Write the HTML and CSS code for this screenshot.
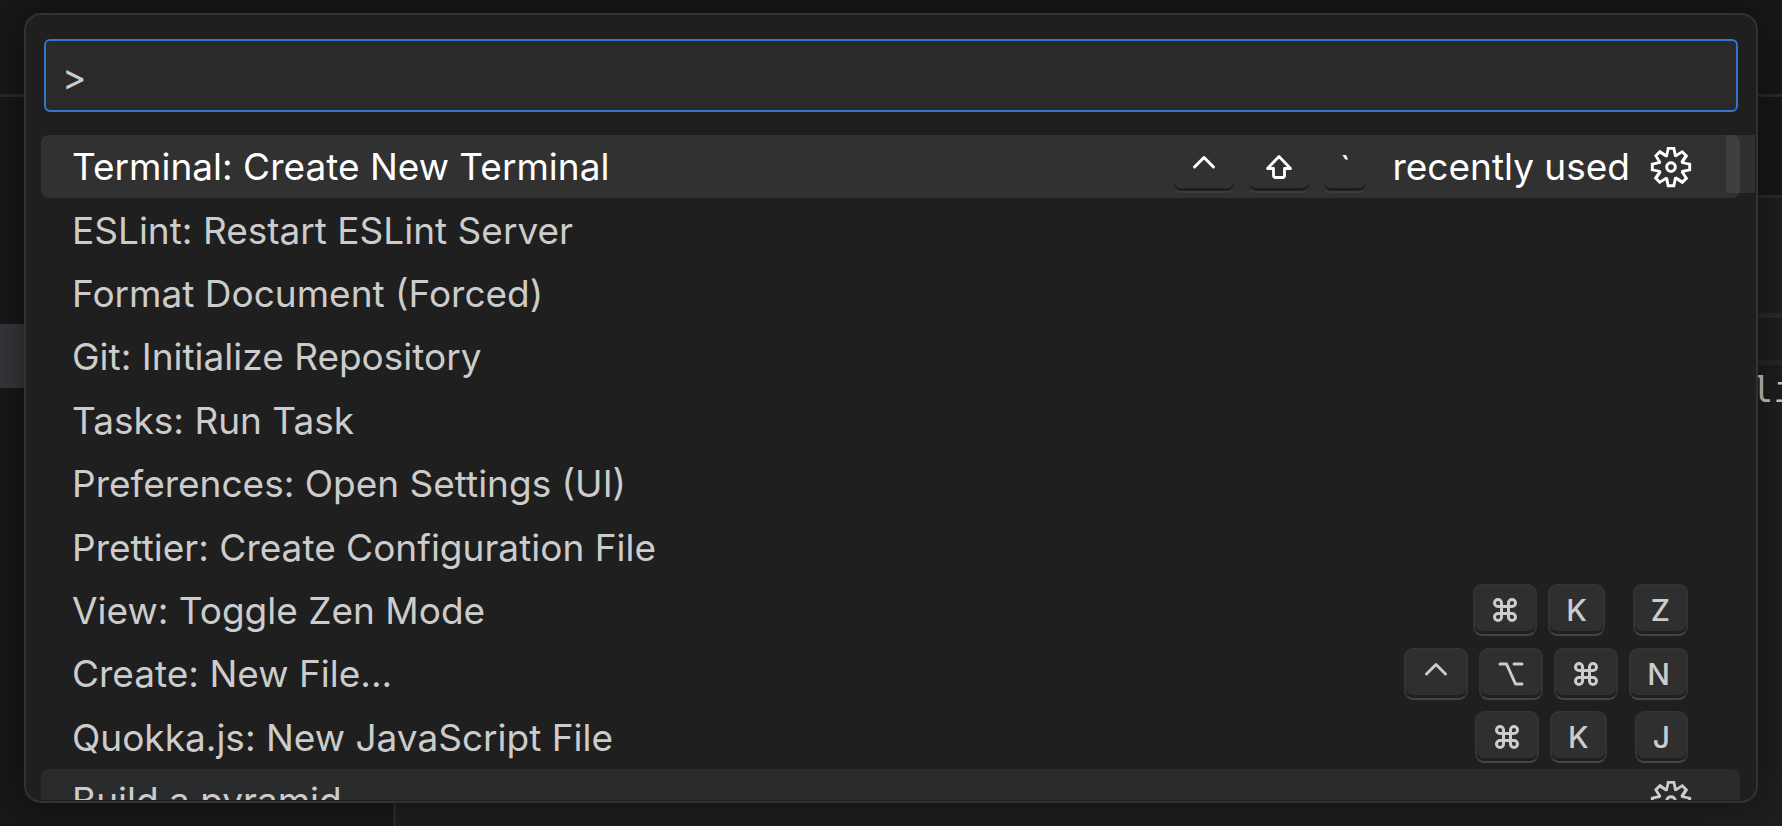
FILE: index.html
```html
<!DOCTYPE html>
<html lang="en">
<head>
    <meta charset="utf-8">
    <title>Command Palette</title>
    <meta name="viewport" content="width=device-width, initial-scale=1">
    <link rel="stylesheet" href="styles.css">
</head>

<body>
    <svg class="defs" aria-hidden="true">
        <symbol id="gear" viewBox="0 0 16 16">
            <path fill="currentColor" fill-rule="evenodd" d="M9.1 4.4L8.6 2H7.4l-.5 2.4-.7.3-2-1.3-.9.8 1.3 2-.2.7-2.4.5v1.2l2.4.5.3.8-1.3 2 .8.8 2-1.3.8.3.4 2.3h1.2l.5-2.4.8-.3 2 1.3.8-.8-1.3-2 .3-.8 2.3-.4V7.4l-2.4-.5-.3-.8 1.3-2-.8-.8-2 1.3-.7-.2zM9.4 1l.5 2.4L12 2.1l2 2-1.4 2.1 2.4.4v2.8l-2.4.5L14 12l-2 2-2.1-1.4-.5 2.4H6.6l-.5-2.4L4 13.9l-2-2 1.4-2.1L1 9.4V6.6l2.4-.5L2.1 4l2-2 2.1 1.4.4-2.4h2.8zm.6 7c0 1.1-.9 2-2 2s-2-.9-2-2 .9-2 2-2 2 .9 2 2zM8 9c.6 0 1-.4 1-1s-.4-1-1-1-1 .4-1 1 .4 1 1 1z"/>
        </symbol>
        <symbol id="cmd" viewBox="0 0 26 26">
            <path fill="none" stroke="currentColor" stroke-width="3" d="M9.500 9.500V6A3.500 3.500 0 1 0 6 9.500H20A3.500 3.500 0 1 0 16.500 6V20A3.500 3.500 0 1 0 20 16.500H6A3.500 3.500 0 1 0 9.500 20Z"/>
        </symbol>
        <symbol id="ctrl" viewBox="0 0 26 26">
            <path fill="none" stroke="currentColor" stroke-width="3" stroke-linecap="round" stroke-linejoin="round" d="M3.500 13L13 3.500L22.500 13"/>
        </symbol>
        <symbol id="opt" viewBox="0 0 26 26">
            <path fill="none" stroke="currentColor" stroke-width="3" stroke-linecap="round" stroke-linejoin="round" d="M2 3H8.500L17.500 23H24M16 3H24"/>
        </symbol>
        <symbol id="shift" viewBox="0 0 26 26">
            <path fill="none" stroke="currentColor" stroke-width="2.800" stroke-linejoin="round" d="M13 2.500L24.500 14.500H18.500V21.500Q18.500 23.500 16.500 23.500H9.500Q7.500 23.500 7.500 21.500V14.500H1.500Z"/>
        </symbol>
    </svg>

    <div class="titlebar"></div>
    <div class="workbench">
        <aside class="sidebar">
            <div class="selected-file"></div>
        </aside>
        <main class="editor">
            <div class="tabs"></div>
            <div class="breadcrumbs"></div>
            <div class="sticky-line"></div>
            <code>li</code>
        </main>
    </div>

    <div class="palette">
        <input type="text" class="search" value="&gt;" aria-label="Command" spellcheck="false" autocomplete="off">
        <div class="results">
            <ul class="recent">
                <li class="focused">
                    <span class="label">Terminal: Create New Terminal</span>
                    <span class="keys"><kbd><svg><use href="#ctrl"/></svg></kbd><kbd><svg><use href="#shift"/></svg></kbd><kbd>`</kbd></span>
                    <span class="note">recently used</span>
                    <button class="gear" aria-label="Configure Keybinding"><svg><use href="#gear"/></svg></button>
                </li>
                <li><span class="label">ESLint: Restart ESLint Server</span></li>
                <li><span class="label">Format Document (Forced)</span></li>
                <li><span class="label">Git: Initialize Repository</span></li>
                <li><span class="label">Tasks: Run Task</span></li>
                <li><span class="label">Preferences: Open Settings (UI)</span></li>
                <li><span class="label">Prettier: Create Configuration File</span></li>
                <li>
                    <span class="label">View: Toggle Zen Mode</span>
                    <span class="keys"><kbd><svg><use href="#cmd"/></svg></kbd><kbd>K</kbd><kbd class="chord">Z</kbd></span>
                </li>
                <li>
                    <span class="label">Create: New File...</span>
                    <span class="keys"><kbd><svg><use href="#ctrl"/></svg></kbd><kbd><svg><use href="#opt"/></svg></kbd><kbd><svg><use href="#cmd"/></svg></kbd><kbd>N</kbd></span>
                </li>
                <li>
                    <span class="label">Quokka.js: New JavaScript File</span>
                    <span class="keys"><kbd><svg><use href="#cmd"/></svg></kbd><kbd>K</kbd><kbd class="chord">J</kbd></span>
                </li>
            </ul>
            <ul>
                <li class="hovered">
                    <span class="label">Build a pyramid</span>
                    <button class="gear" aria-label="Configure Keybinding"><svg><use href="#gear"/></svg></button>
                </li>
            </ul>
            <div class="scrollbar"></div>
        </div>
    </div>
</body>
</html>
```

FILE: styles.css
```css
*{
    box-sizing: border-box;
}
body{
    margin: 0;
    height: 100vh;
    display: flex;
    flex-direction: column;
    overflow: hidden;
    background-color: #181818;
    color: #cccccc;
    font-family: Inter, "Liberation Sans", sans-serif;
    font-size: 37px;
}
.defs{
    display: none;
}

/* window behind the palette */
.titlebar{
    height: 97px;
    flex: none;
    border-bottom: 3px solid #2b2b2b;
}
.workbench{
    flex: 1;
    display: flex;
    min-height: 0;
}
.sidebar{
    width: 396px;
    border-right: 3px solid #2b2b2b;
    padding-top: 227px;
}
.selected-file{
    height: 64px;
    background-color: #37373d;
}
.editor{
    flex: 1;
    background-color: #1f1f1f;
}
.tabs{
    height: 101px;
    background-color: #181818;
    border-bottom: 3px solid #2b2b2b;
}
.breadcrumbs{
    height: 120px;
    border-bottom: 5px solid #2a2a2a;
}
.sticky-line{
    height: 47px;
    border-bottom: 5px solid #282828;
}
.editor code{
    display: block;
    height: 48px;
    margin-right: -13px;
    text-align: right;
    font: 36px/50px "DejaVu Sans Mono", monospace;
}

/* palette */
.palette{
    position: absolute;
    top: 13px;
    right: 24px;
    bottom: 23px;
    left: 24px;
    display: flex;
    flex-direction: column;
    overflow: hidden;
    border: 2px solid #323232;
    border-radius: 17px;
    background-color: #1f1f1f;
    box-shadow: 0 0 46px rgba(0, 0, 0, 0.5);
}
.search{
    flex: none;
    height: 73px;
    margin: 24px 18px 23px;
    padding: 2px 16px 0;
    border: 2px solid #3277cb;
    border-radius: 6px;
    outline: none;
    background-color: #2a2a2a;
    color: #cccccc;
    font: inherit;
}
.results{
    position: relative;
    flex: 1;
    min-height: 0;
    overflow: hidden;
    padding: 0 16px 0 15px;
    margin-bottom: 1px;
}
ul{
    list-style: none;
    margin: 0;
    padding: 0;
}
.recent{
    display: grid;
    grid-template-rows: repeat(10, 1fr);
    height: 634px;
}
li{
    display: flex;
    align-items: center;
    min-height: 63px;
    padding: 0 52px 0 31px;
    border-radius: 8px;
}
.focused{
    background-color: #313131;
    color: #ffffff;
}
.hovered{
    background-color: #2a2b2d;
}
.focused, .hovered{
    padding-right: 46px;
}
.label{
    flex: 1;
    white-space: nowrap;
}
.keys{
    display: flex;
    gap: 11px;
}
kbd{
    height: 52px;
    padding: 0 16px;
    display: flex;
    align-items: center;
    border: 2px solid #333333;
    border-bottom-color: #444444;
    border-radius: 9px;
    background-color: #2f2f2f;
    box-shadow: inset 0 -3px 0 #1f1f1f;
    font: 500 30px/44px Inter, "Liberation Sans", sans-serif;
}
.focused kbd{
    border-color: #313131;
    border-bottom-color: #3c3c3c;
    background-color: #313131;
}
kbd svg{
    width: 26px;
    height: 26px;
    margin: 0 1px;
}
.chord{
    margin-left: 17px;
}
.note{
    margin-left: 24px;
}
.gear{
    display: flex;
    margin-left: 18px;
    padding: 0;
    border: 0;
    background: none;
    color: inherit;
}
.gear svg{
    width: 46px;
    height: 46px;
}
.scrollbar{
    position: absolute;
    top: 0;
    right: 1px;
    width: 29px;
    height: 58px;
    background-color: rgba(116, 120, 124, 0.2);
}
```
